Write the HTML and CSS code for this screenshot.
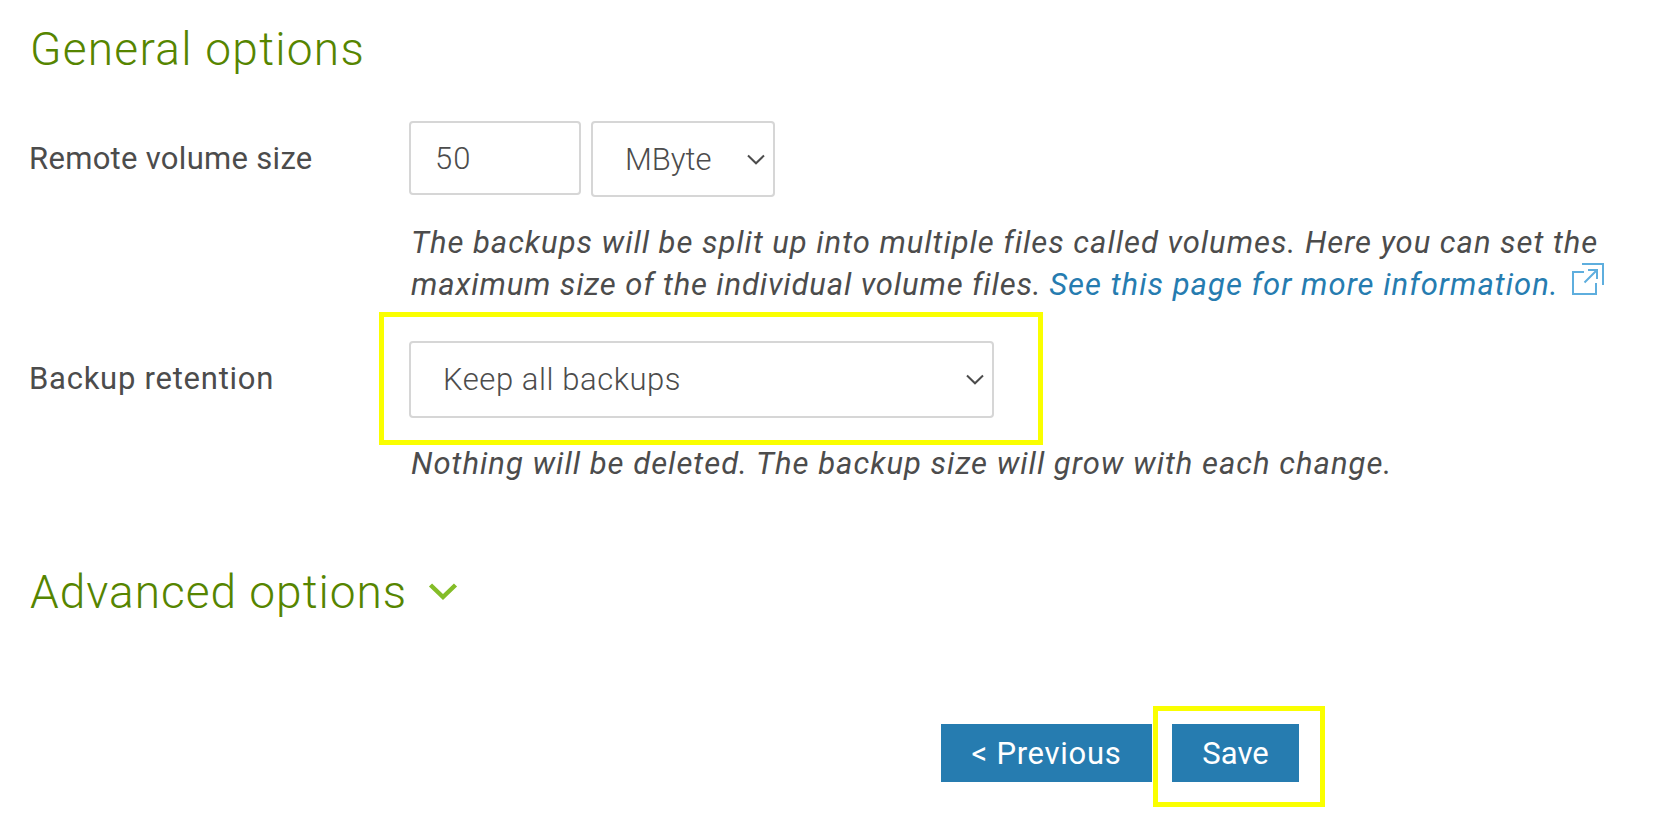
FILE: index.html
```
<!DOCTYPE html>
<html lang="en">
<head>
<meta charset="utf-8">
<title>General options</title>
<link rel="stylesheet" href="styles.css">
</head>
<body>
<main class="page">
  <h2 class="heading"><span class="heading-general">General options</span></h2>

  <div class="row row-volume">
    <label class="label"><span class="label-volume">Remote volume size</span></label>
    <div class="field">
      <div class="controls">
        <div class="input"><span>50</span></div>
        <div class="select select-unit"><span class="unit-text">MByte</span>
          <svg class="chevron" viewBox="0 0 18 11"><path d="M1 1.5 9 9.3 17 1.5"/></svg>
        </div>
      </div>
      <p class="hint"><span class="line-a">The backups will be split up into multiple files called volumes. Here you can set the</span><br><span class="line-b">maximum size of the individual volume files.</span> <a class="link"><span class="line-c">See this page for more information.</span><svg class="external" viewBox="0 0 32 32"><path d="M12 9H1V31H24V20M10 1H31V22M16 7H25V16M25 7 12.5 19.5"/></svg></a></p>
    </div>
  </div>

  <div class="row row-retention">
    <label class="label"><span class="label-retention">Backup retention</span></label>
    <div class="field">
      <div class="select select-retention"><span class="keep-text">Keep all backups</span>
        <svg class="chevron" viewBox="0 0 18 11"><path d="M1 1.5 9 9.3 17 1.5"/></svg>
        <div class="mark mark-retention"></div>
      </div>
      <p class="hint hint-retention"><span class="line-d">Nothing will be deleted. The backup size will grow with each change.</span></p>
    </div>
  </div>

  <h2 class="heading heading-adv"><span class="heading-advanced">Advanced options</span><svg class="toggle" viewBox="0 0 28 18"><path d="M1.5 2 14 14 26.5 2"/></svg></h2>

  <div class="buttons">
    <div class="button previous"><span class="prev-text">&lt; Previous</span></div>
    <div class="button save"><span class="save-text">Save</span><div class="mark mark-save"></div></div>
  </div>
</main>
</body>
</html>
```
FILE: styles.css
```
* { box-sizing: border-box; }
body {
  margin: 0;
  background: #fff;
  color: #4c4c4c;
  font-family: Roboto, "Open Sans", sans-serif;
  font-size: 31px;
  line-height: 42px;
  white-space: nowrap;
}
.page { width: 1656px; height: 818px; padding: 19px 0 0 30px; overflow: hidden; }
.heading {
  margin: 0;
  height: 60px;
  display: flex;
  align-items: center;
  font-size: 46px;
  line-height: 60px;
  font-weight: 300;
  color: #568500;
}
.heading-general { letter-spacing: 1.27px; }
.heading-advanced { letter-spacing: 1px; }
.row { display: grid; grid-template-columns: 379px 1fr; }
.row-volume { margin-top: 42px; }
.label { padding-top: 17px; margin-left: -1px; }
.label-volume { letter-spacing: 0.3px; }
.label-retention { letter-spacing: 0.75px; }
.controls { display: flex; align-items: flex-start; gap: 10px; }
.input, .select {
  border: 2px solid #d6d6d6;
  border-radius: 4px;
  display: flex;
  align-items: center;
  font-weight: 300;
  background: #fff;
}
.input { width: 172px; height: 74px; padding: 2px 0 0 24px; letter-spacing: 1px; }
.select { justify-content: space-between; position: relative; }
.select-unit { width: 184px; height: 76px; padding: 0 8px 0 32px; }
.unit-text { padding-top: 2px; }
.select-retention { width: 585px; height: 77px; padding: 0 8px 0 32px; }
.keep-text { letter-spacing: 0.57px; }
.chevron { width: 18px; height: 11px; fill: none; stroke: #4c4c4c; stroke-width: 2; }
.hint { margin: 25px 0 0 2px; font-style: italic; }
.row-retention { margin-top: 35px; }
.line-a { letter-spacing: 0.975px; }
.line-b { letter-spacing: 0.86px; }
.line-c { letter-spacing: 1.03px; }
.line-d { letter-spacing: 1.01px; }
.link { color: #267cb0; }
.external {
  width: 32px;
  height: 32px;
  margin: -4px 0 0 13px;
  fill: none;
  stroke: #5eaede;
  stroke-width: 2;
}
.heading-adv { margin-top: 77px; }
.toggle { width: 28px; height: 18px; margin-left: 22px; fill: none; stroke: #84bd28; stroke-width: 4.5; overflow: visible; }
.buttons { display: flex; gap: 20px; margin: 102px 0 0 911px; }
.button {
  position: relative;
  display: flex;
  justify-content: center;
  align-items: center;
  height: 58px;
  padding-top: 2px;
  color: #fff;
  background: #267cb0;
}
.prev-text { letter-spacing: 0.7px; }
.previous { width: 211px; }
.save { width: 127px; }
.mark { position: absolute; border: 5px solid #faff00; pointer-events: none; }
.mark-retention { left: -32px; top: -31px; width: 664px; height: 133px; }
.mark-save { left: -19px; top: -18px; width: 172px; height: 101px; }
```
